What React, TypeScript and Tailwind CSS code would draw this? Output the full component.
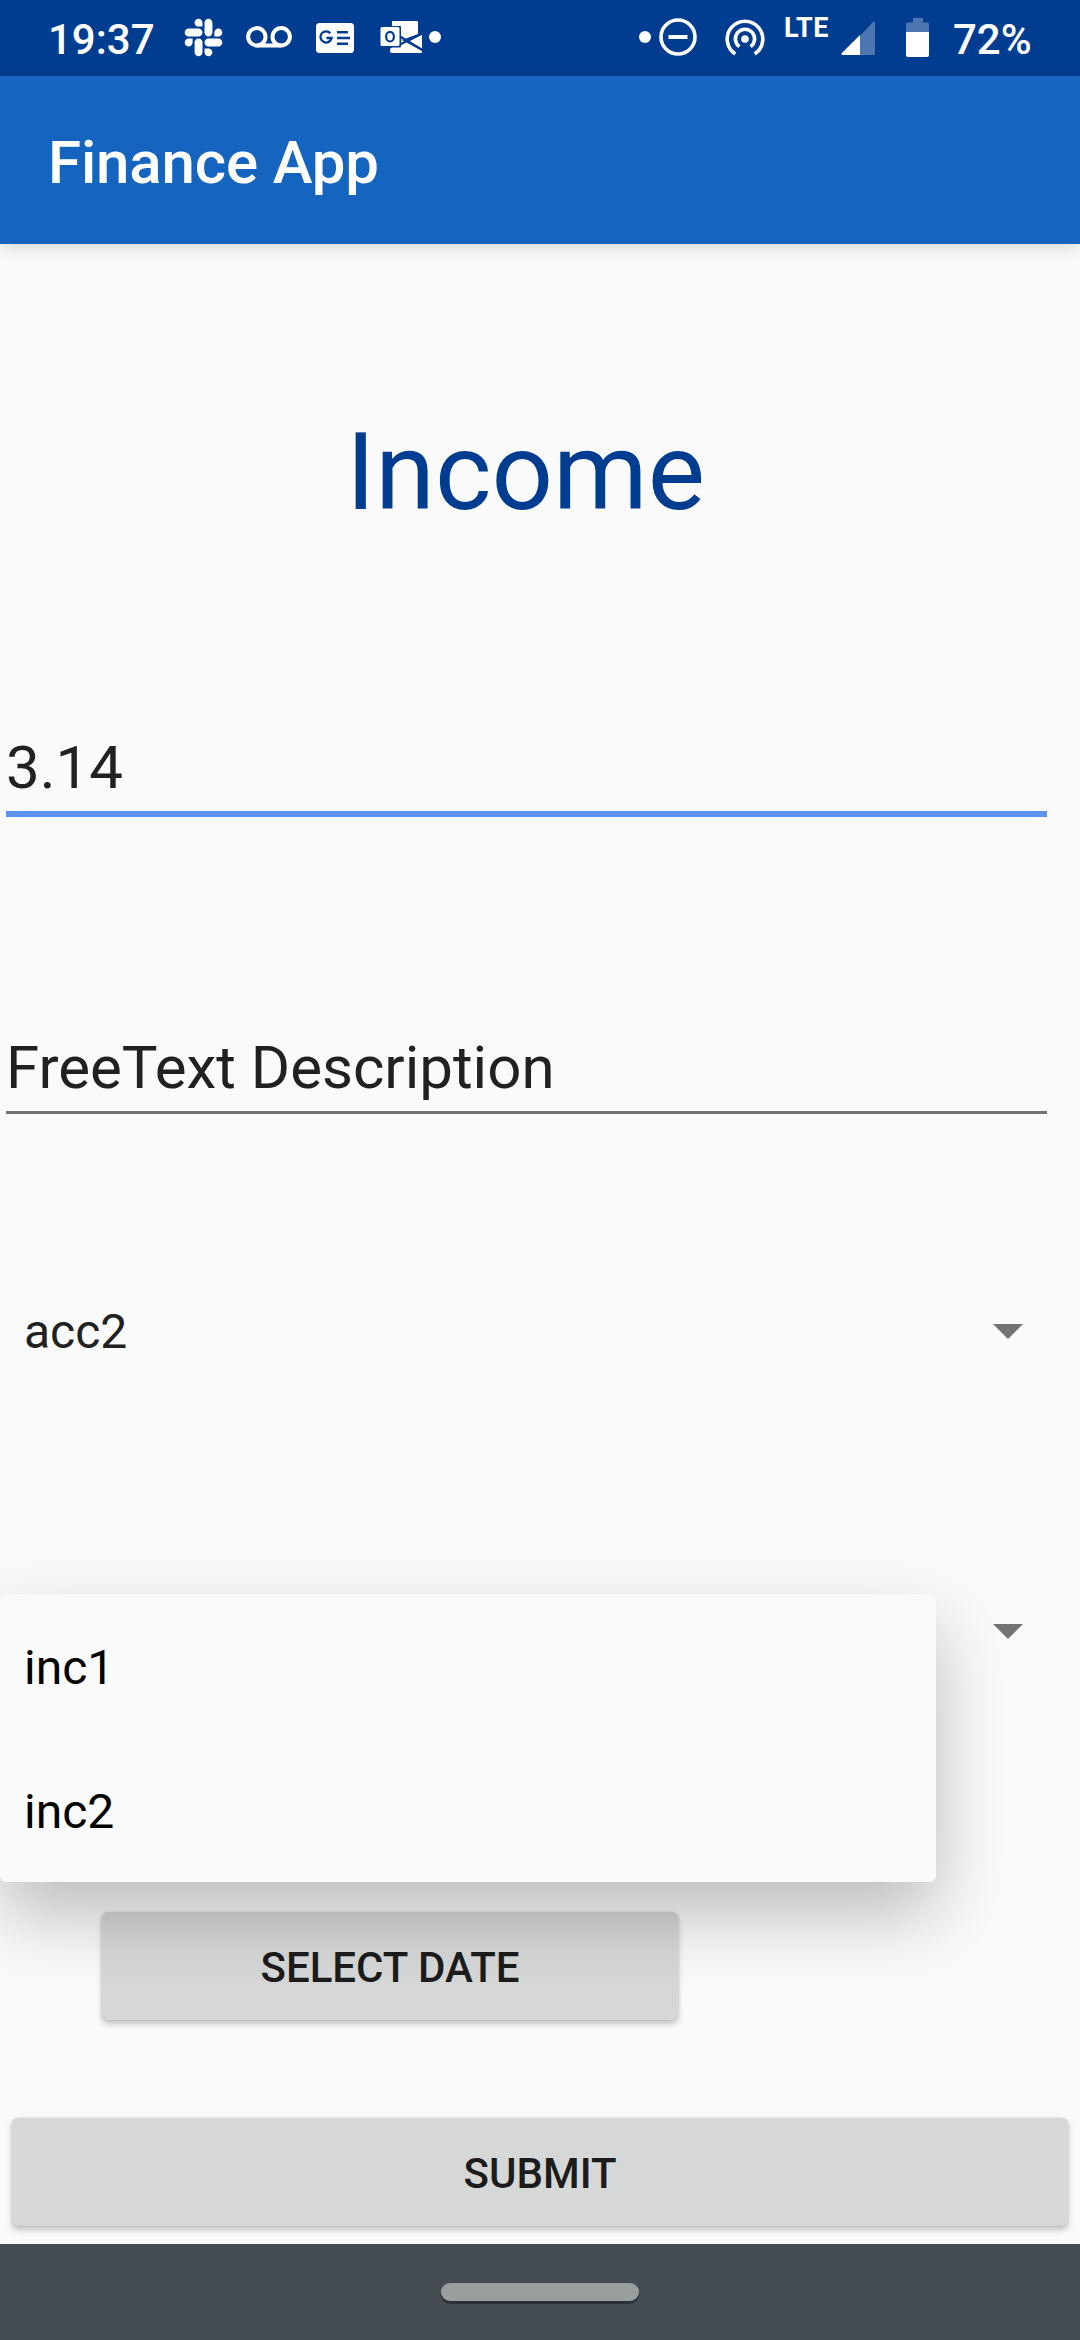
import type { ReactNode } from "react";
import { FaSlack } from "react-icons/fa";

function VoicemailIcon() {
  return (
    <svg className="h-[22px] w-[46px]" viewBox="0 0 46 22" fill="none" stroke="white" strokeWidth="4">
      <circle cx="10.8" cy="10.8" r="8.7" />
      <circle cx="35.2" cy="10.8" r="8.7" />
      <path d="M10.8 19.5H35.2" />
    </svg>
  );
}

function NewsIcon() {
  return (
    <svg className="h-[30px] w-[38px]" viewBox="0 0 38 30">
      <rect width="38" height="30" rx="3.5" fill="white" />
      <path d="M14.3 10.2A5.6 5.6 0 1 0 15.6 15H10.4" fill="none" stroke="#003c8f" strokeWidth="2.3" />
      <path d="M21 9.3H32M21 15H34M21 20.8H32" stroke="#003c8f" strokeWidth="2.4" />
    </svg>
  );
}

function OutlookIcon() {
  return (
    <svg className="h-[33px] w-[43px]" viewBox="0 0 43 33">
      <path d="M12 1H37Q38 1 38 2V14L22 20L12 14Z" fill="white" />
      <path d="M10 29L22 20L42 31V32Q42 33 41 33H12Q10 33 10 31Z" fill="white" />
      <path d="M42 14.5V29L29 21.5Z" fill="white" />
      <path d="M20 16.5L42 29.8M20 24.5L42 13.4" stroke="#003c8f" strokeWidth="2.2" />
      <rect x="-.5" y="6" width="21.5" height="21.5" rx="1" fill="#003c8f" />
      <rect x="0.5" y="7" width="19" height="19" rx="1.5" fill="white" />
      <ellipse cx="10" cy="16.7" rx="3.9" ry="4.8" fill="none" stroke="#003c8f" strokeWidth="2.2" />
    </svg>
  );
}

function DoNotDisturbIcon() {
  return (
    <svg className="h-[38px] w-[38px]" viewBox="0 0 38 38" fill="none" stroke="white">
      <circle cx="19" cy="19" r="17" strokeWidth="3.6" />
      <path d="M9.5 19H28.5" strokeWidth="4" />
    </svg>
  );
}

function HotspotIcon() {
  return (
    <svg className="h-[37px] w-[40px]" viewBox="0 0 40 37" fill="none" stroke="white" strokeWidth="3.6">
      <circle cx="20" cy="20" r="3.8" fill="white" stroke="none" />
      <path d="M14.4 27.6A9.6 9.6 0 1 1 25.6 27.6" />
      <path d="M10.3 35A17.8 17.8 0 1 1 29.7 35" />
    </svg>
  );
}

function SignalIcon() {
  return (
    <svg className="h-[34px] w-[34px]" viewBox="0 0 34 34">
      <path d="M19 15L32 1Q34 0 34 2V32.5Q34 34 32.5 34H19Z" fill="white" fillOpacity=".3" />
      <path d="M19 14V34H2Q-.6 34 .9 32Z" fill="white" />
    </svg>
  );
}

function BatteryIcon() {
  return (
    <svg className="h-[39px] w-[23px]" viewBox="0 0 23 39">
      <path d="M7 0H17V4.5H21.5Q23 4.5 23 6V14H0V6Q0 4.5 1.5 4.5H7Z" fill="white" fillOpacity=".3" />
      <path d="M0 14H23V37Q23 39 21 39H2Q0 39 0 37Z" fill="white" />
    </svg>
  );
}

function StatusBar() {
  return (
    <div className="flex h-[76px] items-start bg-[#003c8f] text-[42px] leading-[50px] font-medium text-white">
      <span className="mt-[15px] ml-[48px] w-[135px]">19:37</span>
      <FaSlack className="mt-[16px] -ml-px size-[43px]" />
      <div className="mt-[26px] ml-[21px]"><VoicemailIcon /></div>
      <div className="mt-[23px] ml-[24px]"><NewsIcon /></div>
      <div className="mt-[20px] ml-[26px]"><OutlookIcon /></div>
      <div className="mt-[31px] ml-[6px] size-[12px] rounded-full bg-white" />
      <div className="mt-[31px] ml-auto size-[12px] rounded-full bg-white" />
      <div className="mt-[18px] ml-[8px]"><DoNotDisturbIcon /></div>
      <div className="mt-[19px] ml-[28px]"><HotspotIcon /></div>
      <span className="mt-[13px] ml-[19px] w-[57px] text-[27px] leading-[30px] font-bold tracking-[0.4px]">LTE</span>
      <div className="mt-[21px]"><SignalIcon /></div>
      <div className="mt-[18px] ml-[31px]"><BatteryIcon /></div>
      <span className="mt-[15px] ml-[24px] w-[127px]">72%</span>
    </div>
  );
}

function Caret() {
  return (
    <svg className="h-[16px] w-[30px]" viewBox="0 0 30 16">
      <path d="M0 0H30L15 15Z" fill="#737373" />
    </svg>
  );
}

function Spinner({ children, className }: { children?: ReactNode; className: string }) {
  return (
    <div className={`relative flex h-[96px] items-center justify-between pr-[57px] pl-[24px] text-[48px] text-[#212121] ${className}`}>
      {children}
      <Caret />
    </div>
  );
}

const buttonClass =
  "flex h-[108px] items-center justify-center rounded-[6px] bg-[#d6d7d7] pt-[2px] text-[42px] font-medium text-[#1c1c1c] shadow-[0_4px_6px_rgba(0,0,0,0.22),0_0_3px_rgba(0,0,0,0.12)]";

export default function App() {
  return (
    <div className="flex h-[2340px] w-[1080px] flex-col overflow-hidden bg-[#fafafa] font-['Roboto',sans-serif]">
      <StatusBar />
      <header className="flex h-[168px] items-center bg-[#1565c0] pt-[5px] pl-[48px] text-[60px] font-medium tracking-[-0.15px] text-white shadow-[0_4px_16px_rgba(0,0,0,0.14)]">
        Finance App
      </header>

      <main className="flex h-[2000px] flex-col">
        <h1 className="mt-[164px] h-[128px] w-[1051px] text-center text-[108px] leading-[128px] text-[#003c8f]">
          Income
        </h1>
        <div className="mt-[194px] mr-[33px] ml-[6px] h-[87px] border-b-[6px] border-[#5e92f3] text-[60px] leading-[76px] text-[#212121]">
          3.14
        </div>
        <div className="mt-[213px] mr-[33px] ml-[6px] h-[84px] border-b-[3px] border-[#737373] text-[60px] leading-[76px] text-[#212121]">
          FreeText Description
        </div>
        <Spinner className="mt-[170px]">
          <span>acc2</span>
        </Spinner>
        <Spinner className="z-10 mt-[204px]">
          <span />
          <ul className="absolute top-[10px] left-0 w-[936px] rounded-[6px] bg-[#fafafa] text-black shadow-[0_32px_72px_rgba(0,0,0,0.25)]">
            <li className="flex h-[144px] items-center pt-[3px] pl-[24px]">inc1</li>
            <li className="flex h-[144px] items-center pt-[3px] pl-[24px]">inc2</li>
          </ul>
        </Spinner>
        <button className={`mt-[232px] ml-[102px] w-[576px] ${buttonClass}`}>SELECT DATE</button>
        <button className={`mx-[12px] mt-[98px] ${buttonClass}`}>SUBMIT</button>
      </main>

      <nav className="flex h-[96px] justify-center bg-[#454d53] pt-[39px]">
        <div className="h-[18px] w-[198px] rounded-full bg-[#9a9e9f] shadow-[0_3px_0_#2b3235]" />
      </nav>
    </div>
  );
}
